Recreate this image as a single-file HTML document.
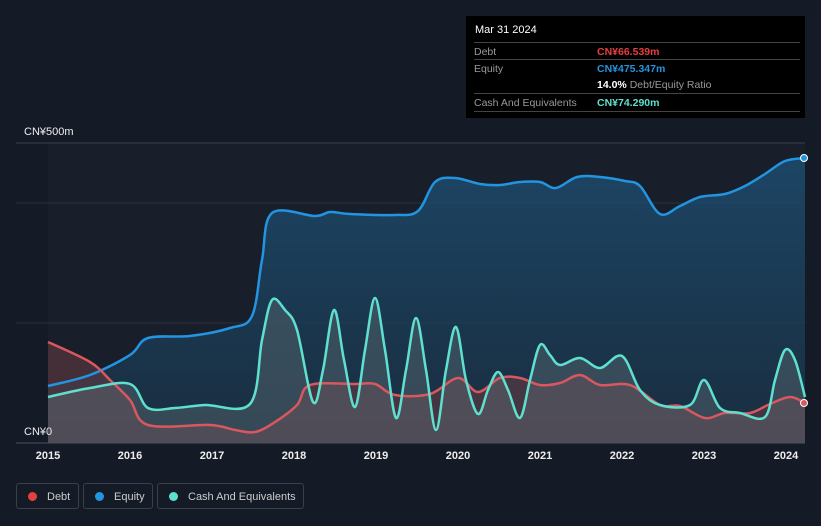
<!DOCTYPE html>
<html><head><meta charset="utf-8"><style>
body{margin:0;width:821px;height:526px;background:#151b26;font-family:"Liberation Sans",sans-serif;overflow:hidden;position:relative}
.tt{position:absolute;left:466px;top:16px;width:339px;height:102px;background:#000;}
.tt .h{position:absolute;left:9px;top:8px;color:#fff;font-size:11px}
.row{position:absolute;left:8px;width:326px;border-top:1px solid #444;height:17px;font-size:10.5px;color:#999}
.row span{position:absolute;left:123px;top:3px;font-weight:bold}
.row .l{position:absolute;left:0;top:3px;font-weight:normal}
.lg{position:absolute;top:483px;height:26px;border:1px solid #3a404a;border-radius:3px;color:#ccc;font-size:11px;line-height:26px;box-sizing:border-box}
.lg i{display:inline-block;width:9px;height:9px;border-radius:50%;margin:0 10px 0 11px;vertical-align:-1px}
.yr{position:absolute;top:450px;color:#eee;font-size:11px;font-weight:bold;transform:translateX(-50%)}
</style></head><body>
<svg id="s" width="821" height="526" style="position:absolute;left:0;top:0">
<defs>
<linearGradient id="eg" x1="0" y1="0" x2="0" y2="1"><stop offset="0" stop-color="#1d4f73" stop-opacity=".8"/><stop offset="1" stop-color="#1a3348" stop-opacity=".7"/></linearGradient>
</defs>
<rect x="48" y="143" width="757" height="300" fill="#181f2b"/>
<line x1="16" y1="143" x2="805" y2="143" stroke="#3a414c"/>
<line x1="16" y1="203" x2="805" y2="203" stroke="#2a313c"/>
<line x1="16" y1="323" x2="805" y2="323" stroke="#2a313c"/>
<path id="ef" fill="url(#eg)"/>
<path id="df" fill="#6a3a44" opacity=".55"/>
<path id="cf" fill="#5a6b72" opacity=".45"/>
<path id="el" fill="none" stroke="#2394e0" stroke-width="2.5"/>
<path id="dl" fill="none" stroke="#d9575f" stroke-width="2.5"/>
<path id="cl" fill="none" stroke="#5fe0cf" stroke-width="2.5"/>
<circle cx="804" cy="158" r="3.5" fill="#2394e0" stroke="#fff" stroke-width="1"/>
<circle cx="804" cy="403" r="3.5" fill="#d9575f" stroke="#fff" stroke-width="1"/>
<line x1="16" y1="443" x2="805" y2="443" stroke="#4a515c"/>
<text x="24" y="135" fill="#eee" font-size="11" font-family="Liberation Sans">CN¥500m</text>
<text x="24" y="435" fill="#eee" font-size="11" font-family="Liberation Sans">CN¥0</text>
</svg>
<script>
function sm(p){var d="M"+p[0];for(var i=0;i<p.length-1;i++){var a=p[i-1]||p[i],b=p[i],c=p[i+1],e=p[i+2]||c;var k=6;var c1=[b[0]+(c[0]-a[0])/k,b[1]+(c[1]-a[1])/k],c2=[c[0]-(e[0]-b[0])/k,c[1]-(e[1]-b[1])/k];d+="C"+c1+" "+c2+" "+c;}return d;}
function P(s){return s.trim().split(/\s+/).map(function(t){return t.split(",").map(Number)});}
var E=P("48,386 90,375 130,355 148,338 190,336 230,328 252,316 262,260 272,213 315,216 330,212 350,214 395,215 418,211 435,182 455,178 480,184 500,185 520,182 540,182 556,188 577,177 600,177 625,181 640,186 660,214 680,206 700,197 725,194 745,186 765,174 785,161 805,158");
var D=P("48,342 90,362 110,380 130,400 148,425 210,425 235,430 255,432 275,422 297,405 310,385 355,384 375,384 395,395 430,394 458,378 478,392 500,378 520,378 540,385 560,383 580,375 600,385 630,385 660,405 680,406 705,418 725,413 750,413 770,404 790,397 805,403");
var C=P("48,397 90,388 130,384 148,408 175,408 205,405 250,404 262,340 272,300 285,310 297,330 313,402 323,370 334,310 344,360 355,407 365,350 375,298 385,350 396,418 406,370 416,318 426,370 436,430 446,370 456,327 466,380 478,414 488,390 498,372 508,390 520,418 530,380 540,345 550,355 560,365 580,358 600,368 622,356 640,390 660,405 690,405 704,380 720,408 740,413 765,417 775,380 785,350 795,360 805,397");
[[E,"e"],[D,"d"],[C,"c"]].forEach(function(x){var s=sm(x[0]);document.getElementById(x[1]+"l").setAttribute("d",s);document.getElementById(x[1]+"f").setAttribute("d",s+"L805,443L48,443Z");});
</script>
<div class="yr" style="left:48px">2015</div><div class="yr" style="left:130px">2016</div><div class="yr" style="left:212px">2017</div><div class="yr" style="left:294px">2018</div><div class="yr" style="left:376px">2019</div><div class="yr" style="left:458px">2020</div><div class="yr" style="left:540px">2021</div><div class="yr" style="left:622px">2022</div><div class="yr" style="left:704px">2023</div><div class="yr" style="left:786px">2024</div>
<div class="tt"><div class="h">Mar 31 2024</div>
<div class="row" style="top:26px"><b class="l">Debt</b><span style="color:#e5403f">CN¥66.539m</span></div>
<div class="row" style="top:43px"><b class="l">Equity</b><span style="color:#2394e0">CN¥475.347m</span></div>
<div class="row" style="top:60px;border-top:none"><span style="color:#fff">14.0% <b style="color:#999;font-weight:normal">Debt/Equity Ratio</b></span></div>
<div class="row" style="top:77px;border-bottom:1px solid #444"><b class="l">Cash And Equivalents</b><span style="color:#5fe0cf">CN¥74.290m</span></div>
</div>
<div class="lg" style="left:16px;width:63px"><i style="background:#e5403f"></i>Debt</div>
<div class="lg" style="left:83px;width:70px"><i style="background:#2394e0"></i>Equity</div>
<div class="lg" style="left:157px;width:147px"><i style="background:#5fe0cf"></i>Cash And Equivalents</div>
</body></html>
